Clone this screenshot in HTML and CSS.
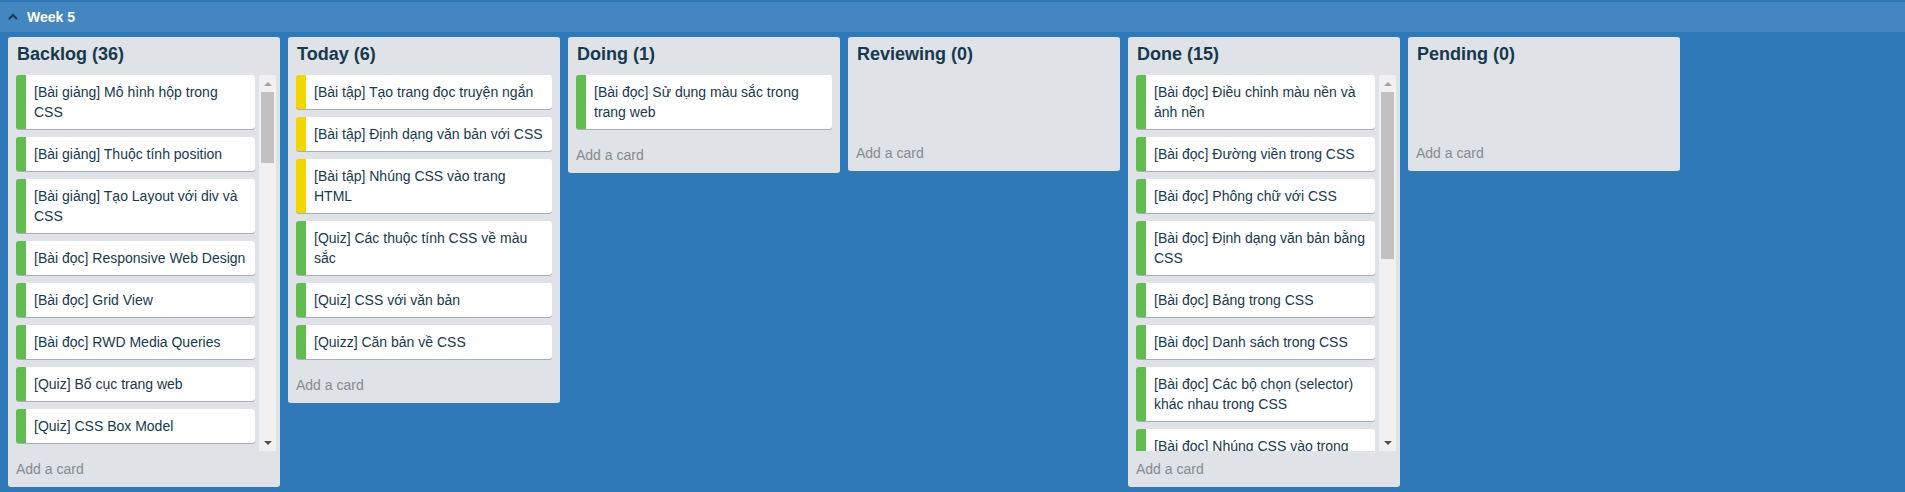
FILE: index.html
```html
<!DOCTYPE html>
<html lang="vi">
<head>
<meta charset="utf-8">
<title>Week 5</title>
<link rel="stylesheet" href="styles.css">
</head>
<body>
<div class="week-bar">
  <svg class="chev" width="10" height="7" viewBox="0 0 10 7"><polyline points="1,6 5,2 9,6" fill="none" stroke="#17394d" stroke-width="2"/></svg>
  <span class="week-title">Week 5</span>
</div>
<div class="board">
  <section class="list">
    <h2 class="list-title">Backlog (36)</h2>
    <div class="list-body">
      <div class="cards">
        <div class="card green">[Bài giảng] Mô hình hộp trong CSS</div>
        <div class="card green">[Bài giảng] Thuộc tính position</div>
        <div class="card green">[Bài giảng] Tạo Layout với div và CSS</div>
        <div class="card green">[Bài đọc] Responsive Web Design</div>
        <div class="card green">[Bài đọc] Grid View</div>
        <div class="card green">[Bài đọc] RWD Media Queries</div>
        <div class="card green">[Quiz] Bố cục trang web</div>
        <div class="card green">[Quiz] CSS Box Model</div>
      </div>
      <div class="scrollbar">
        <span class="sb-btn"><i class="tri up"></i></span>
        <div class="sb-track"><div class="sb-thumb" style="height:71px"></div></div>
        <span class="sb-btn"><i class="tri down"></i></span>
      </div>
    </div>
    <div class="add">Add a card</div>
  </section>

  <section class="list">
    <h2 class="list-title">Today (6)</h2>
    <div class="list-body">
      <div class="cards">
        <div class="card yellow">[Bài tập] Tạo trang đọc truyện ngắn</div>
        <div class="card yellow">[Bài tập] Định dạng văn bản với CSS</div>
        <div class="card yellow">[Bài tập] Nhúng CSS vào trang HTML</div>
        <div class="card green">[Quiz] Các thuộc tính CSS về màu sắc</div>
        <div class="card green">[Quiz] CSS với văn bản</div>
        <div class="card green">[Quizz] Căn bản về CSS</div>
      </div>
    </div>
    <div class="add">Add a card</div>
  </section>

  <section class="list">
    <h2 class="list-title">Doing (1)</h2>
    <div class="list-body">
      <div class="cards">
        <div class="card green">[Bài đọc] Sử dụng màu sắc trong trang web</div>
      </div>
    </div>
    <div class="add">Add a card</div>
  </section>

  <section class="list">
    <h2 class="list-title">Reviewing (0)</h2>
    <div class="list-body">
      <div class="cards empty"></div>
    </div>
    <div class="add">Add a card</div>
  </section>

  <section class="list">
    <h2 class="list-title">Done (15)</h2>
    <div class="list-body">
      <div class="cards">
        <div class="card green">[Bài đọc] Điều chỉnh màu nền và ảnh nền</div>
        <div class="card green">[Bài đọc] Đường viền trong CSS</div>
        <div class="card green">[Bài đọc] Phông chữ với CSS</div>
        <div class="card green">[Bài đọc] Định dạng văn bản bằng CSS</div>
        <div class="card green">[Bài đọc] Bảng trong CSS</div>
        <div class="card green">[Bài đọc] Danh sách trong CSS</div>
        <div class="card green">[Bài đọc] Các bộ chọn (selector) khác nhau trong CSS</div>
        <div class="card green">[Bài đọc] Nhúng CSS vào trong</div>
      </div>
      <div class="scrollbar">
        <span class="sb-btn"><i class="tri up"></i></span>
        <div class="sb-track"><div class="sb-thumb" style="height:167px"></div></div>
        <span class="sb-btn"><i class="tri down"></i></span>
      </div>
    </div>
    <div class="add">Add a card</div>
  </section>

  <section class="list">
    <h2 class="list-title">Pending (0)</h2>
    <div class="list-body">
      <div class="cards empty"></div>
    </div>
    <div class="add">Add a card</div>
  </section>
</div>
</body>
</html>
```

FILE: styles.css
```css
* { box-sizing: border-box; }

html, body {
  margin: 0;
  padding: 0;
}

body {
  background: #3079b9;
  font-family: "Liberation Sans", Arial, Helvetica, sans-serif;
  color: #17394d;
  height: 492px;
  overflow: hidden;
}

.week-bar {
  margin-top: 2px;
  height: 30px;
  background: #4486c0;
  display: flex;
  align-items: center;
  padding-left: 8px;
  gap: 9px;
}

.chev {
  display: block;
  margin-top: -1px;
}

.week-title {
  color: #ffffff;
  font-weight: bold;
  font-size: 14px;
  line-height: 16px;
}

.board {
  display: flex;
  align-items: flex-start;
  gap: 8px;
  padding: 5px 8px;
}

.list {
  width: 272px;
  flex: 0 0 272px;
  max-height: 450px;
  background: #dfe2e6;
  border-radius: 3px;
  display: flex;
  flex-direction: column;
  padding: 0 4px 0 8px;
}

.list-title {
  margin: 0;
  font-size: 18px;
  font-weight: bold;
  line-height: 22px;
  padding: 6px 4px 10px 1px;
  color: #17394d;
}

.list-body {
  flex: 1 1 auto;
  min-height: 0;
  display: flex;
}

.cards {
  flex: 1 1 auto;
  min-width: 0;
  overflow: hidden;
  padding-right: 4px;
}

.cards.empty {
  min-height: 60px;
}

.card {
  background: #ffffff;
  border-radius: 3px;
  box-shadow: 0 1px 0 rgba(9, 45, 66, 0.28);
  font-size: 14px;
  line-height: 20px;
  padding: 7px 8px;
  margin-bottom: 8px;
  border-left: 10px solid #61bd4f;
  color: #17394d;
}

.card.green { border-left-color: #61bd4f; }
.card.yellow { border-left-color: #f2d600; }

.scrollbar {
  flex: 0 0 17px;
  width: 17px;
  background: #f1f1f1;
  display: flex;
  flex-direction: column;
}

.sb-btn {
  flex: 0 0 17px;
  height: 17px;
  display: flex;
  align-items: center;
  justify-content: center;
}

.sb-track {
  flex: 1 1 auto;
  padding: 0 2px;
}

.sb-thumb {
  background: #c1c1c1;
  width: 100%;
}

.tri {
  display: block;
  width: 0;
  height: 0;
  border-left: 4px solid transparent;
  border-right: 4px solid transparent;
}

.tri.up {
  border-bottom: 4px solid #a3a3a3;
}

.tri.down {
  border-top: 4px solid #505050;
}

.add {
  font-size: 14px;
  line-height: 20px;
  padding: 8px 0;
  color: #838c91;
  flex: 0 0 auto;
}
```
